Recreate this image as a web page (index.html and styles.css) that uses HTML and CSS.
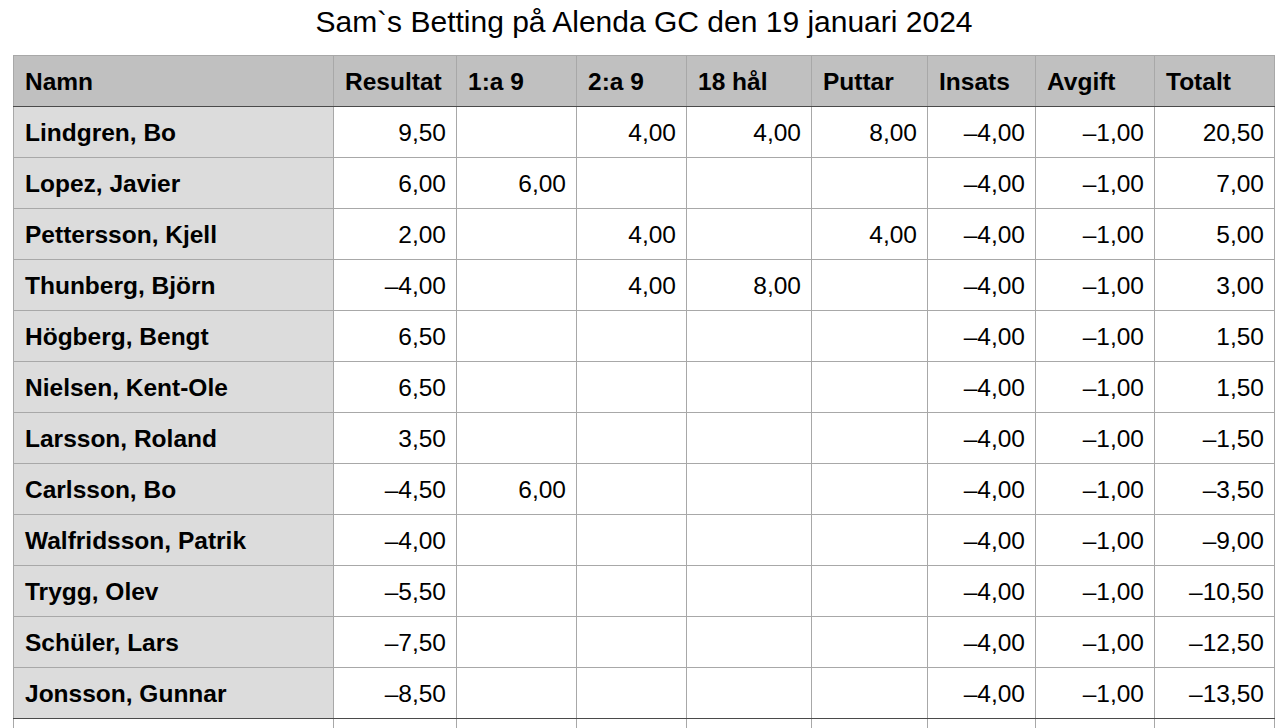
FILE: index.html
```html
<!DOCTYPE html>
<html lang="sv">
<head>
<meta charset="utf-8">
<title>Sam`s Betting</title>
<link rel="stylesheet" href="styles.css">
</head>
<body>
<h1 class="title">Sam`s Betting på Alenda GC den 19 januari 2024</h1>
<table class="sheet">
  <colgroup>
    <col class="c-name">
    <col class="c-res">
    <col class="c-n1">
    <col class="c-n2">
    <col class="c-18">
    <col class="c-putt">
    <col class="c-ins">
    <col class="c-avg">
    <col class="c-tot">
  </colgroup>
  <thead>
    <tr>
      <th>Namn</th><th>Resultat</th><th>1:a 9</th><th>2:a 9</th><th>18 hål</th><th>Puttar</th><th>Insats</th><th>Avgift</th><th>Totalt</th>
    </tr>
  </thead>
  <tbody>
    <tr><th>Lindgren, Bo</th><td>9,50</td><td></td><td>4,00</td><td>4,00</td><td>8,00</td><td>–4,00</td><td>–1,00</td><td>20,50</td></tr>
    <tr><th>Lopez, Javier</th><td>6,00</td><td>6,00</td><td></td><td></td><td></td><td>–4,00</td><td>–1,00</td><td>7,00</td></tr>
    <tr><th>Pettersson, Kjell</th><td>2,00</td><td></td><td>4,00</td><td></td><td>4,00</td><td>–4,00</td><td>–1,00</td><td>5,00</td></tr>
    <tr><th>Thunberg, Björn</th><td>–4,00</td><td></td><td>4,00</td><td>8,00</td><td></td><td>–4,00</td><td>–1,00</td><td>3,00</td></tr>
    <tr><th>Högberg, Bengt</th><td>6,50</td><td></td><td></td><td></td><td></td><td>–4,00</td><td>–1,00</td><td>1,50</td></tr>
    <tr><th>Nielsen, Kent-Ole</th><td>6,50</td><td></td><td></td><td></td><td></td><td>–4,00</td><td>–1,00</td><td>1,50</td></tr>
    <tr><th>Larsson, Roland</th><td>3,50</td><td></td><td></td><td></td><td></td><td>–4,00</td><td>–1,00</td><td>–1,50</td></tr>
    <tr><th>Carlsson, Bo</th><td>–4,50</td><td>6,00</td><td></td><td></td><td></td><td>–4,00</td><td>–1,00</td><td>–3,50</td></tr>
    <tr><th>Walfridsson, Patrik</th><td>–4,00</td><td></td><td></td><td></td><td></td><td>–4,00</td><td>–1,00</td><td>–9,00</td></tr>
    <tr><th>Trygg, Olev</th><td>–5,50</td><td></td><td></td><td></td><td></td><td>–4,00</td><td>–1,00</td><td>–10,50</td></tr>
    <tr><th>Schüler, Lars</th><td>–7,50</td><td></td><td></td><td></td><td></td><td>–4,00</td><td>–1,00</td><td>–12,50</td></tr>
    <tr><th>Jonsson, Gunnar</th><td>–8,50</td><td></td><td></td><td></td><td></td><td>–4,00</td><td>–1,00</td><td>–13,50</td></tr>
  </tbody>
  <tfoot>
    <tr><td></td><td></td><td></td><td></td><td></td><td></td><td></td><td></td><td></td></tr>
  </tfoot>
</table>
</body>
</html>
```

FILE: styles.css
```css
html, body {
  margin: 0;
  padding: 0;
  background: #ffffff;
}
body {
  font-family: "Liberation Sans", Arial, sans-serif;
  color: #000;
  overflow: hidden;
  height: 728px;
}
.title {
  margin: 0;
  height: 55px;
  font-size: 30px;
  font-weight: normal;
  line-height: 44px;
  text-align: center;
}
.sheet {
  margin-left: 13px;
  width: 1261px;
  border-collapse: collapse;
  table-layout: fixed;
  font-size: 24.5px;
}
.c-name { width: 320px; }
.c-res { width: 123px; }
.c-n1 { width: 120px; }
.c-n2 { width: 110px; }
.c-18 { width: 125px; }
.c-putt { width: 116px; }
.c-ins { width: 108px; }
.c-avg { width: 119px; }
.c-tot { width: 120px; }

.sheet th,
.sheet td {
  height: 51px;
  padding: 2px 10px 0 11px;
  border: 1px solid #a8a8a8;
  box-sizing: border-box;
  white-space: nowrap;
  overflow: hidden;
}
.sheet thead th {
  background: #c0c0c0;
  font-weight: bold;
  text-align: left;
  border-bottom: 1px solid #4a4a4a;
}
.sheet tbody th {
  background: #dcdcdc;
  font-weight: bold;
  text-align: left;
}
.sheet tbody td {
  text-align: right;
  background: #ffffff;
}
.sheet tbody tr:last-child > th,
.sheet tbody tr:last-child > td {
  border-bottom: 1px solid #4a4a4a;
}
.sheet tfoot td {
  height: 9px;
  padding: 0;
  border-top: 1px solid #4a4a4a;
  border-bottom: 0;
  background: #ffffff;
}
```
